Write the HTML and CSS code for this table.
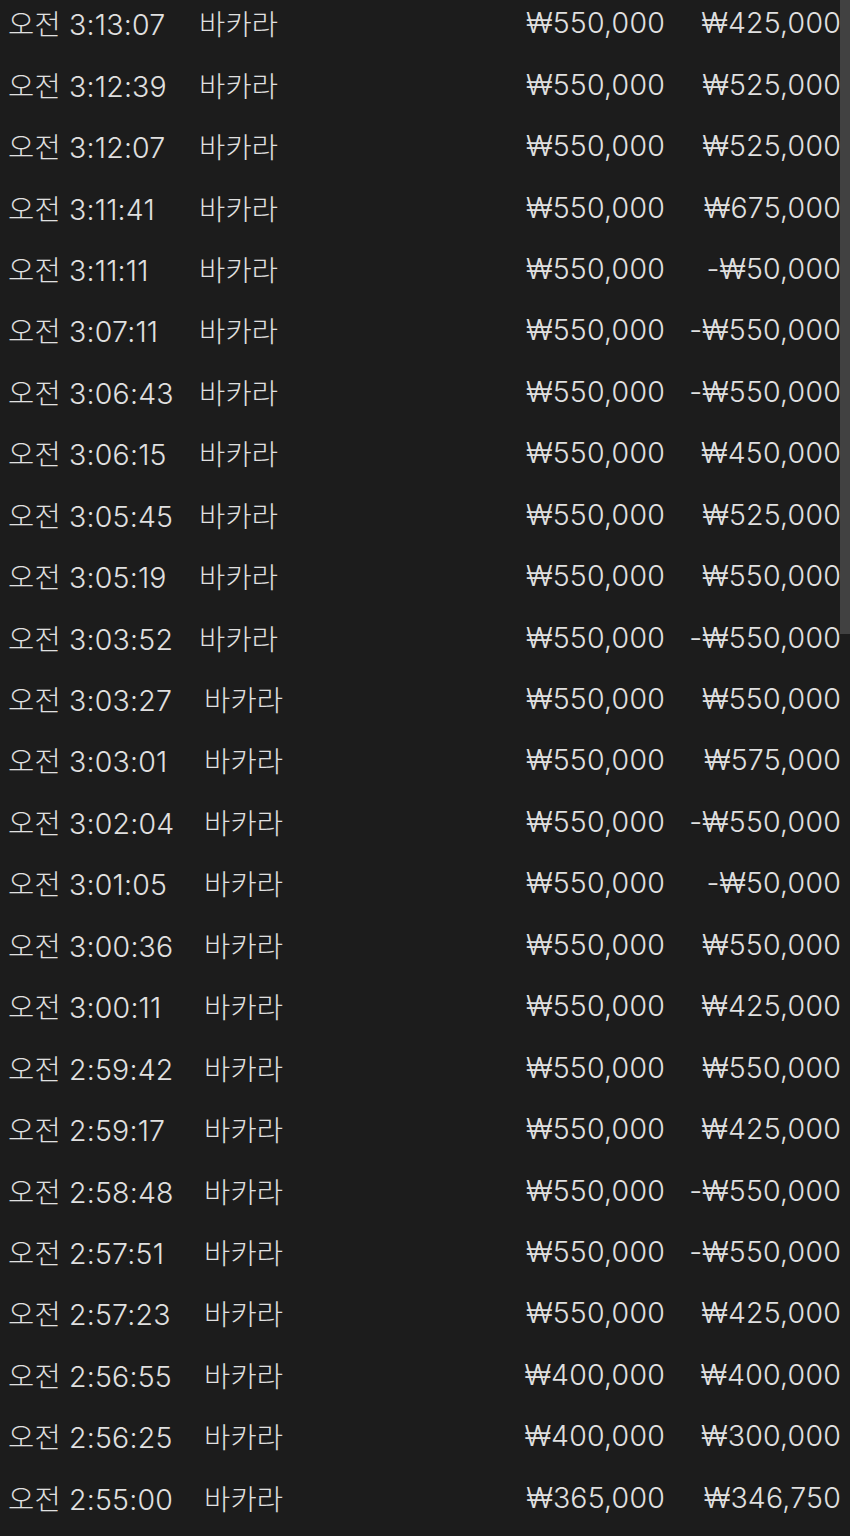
FILE: index.html
```html
<!DOCTYPE html>
<html lang="ko">
<head>
  <meta charset="UTF-8" />
  <meta name="viewport" content="width=device-width, initial-scale=1.0"/>
  <title>베팅 내역</title>
  <link rel="stylesheet" href="styles.css">
</head>
<body>
  <div class="history">
    <div class="row"><span class="time">오전 3:13:07</span><span class="game">바카라</span><span class="bet">₩550,000</span><span class="result">₩425,000</span></div>
    <div class="row"><span class="time">오전 3:12:39</span><span class="game">바카라</span><span class="bet">₩550,000</span><span class="result">₩525,000</span></div>
    <div class="row"><span class="time">오전 3:12:07</span><span class="game">바카라</span><span class="bet">₩550,000</span><span class="result">₩525,000</span></div>
    <div class="row"><span class="time">오전 3:11:41</span><span class="game">바카라</span><span class="bet">₩550,000</span><span class="result">₩675,000</span></div>
    <div class="row"><span class="time">오전 3:11:11</span><span class="game">바카라</span><span class="bet">₩550,000</span><span class="result">-₩50,000</span></div>
    <div class="row"><span class="time">오전 3:07:11</span><span class="game">바카라</span><span class="bet">₩550,000</span><span class="result">-₩550,000</span></div>
    <div class="row"><span class="time">오전 3:06:43</span><span class="game">바카라</span><span class="bet">₩550,000</span><span class="result">-₩550,000</span></div>
    <div class="row"><span class="time">오전 3:06:15</span><span class="game">바카라</span><span class="bet">₩550,000</span><span class="result">₩450,000</span></div>
    <div class="row"><span class="time">오전 3:05:45</span><span class="game">바카라</span><span class="bet">₩550,000</span><span class="result">₩525,000</span></div>
    <div class="row"><span class="time">오전 3:05:19</span><span class="game">바카라</span><span class="bet">₩550,000</span><span class="result">₩550,000</span></div>
    <div class="row"><span class="time">오전 3:03:52</span><span class="game">바카라</span><span class="bet">₩550,000</span><span class="result">-₩550,000</span></div>
    <div class="row shifted"><span class="time">오전 3:03:27</span><span class="game">바카라</span><span class="bet">₩550,000</span><span class="result">₩550,000</span></div>
    <div class="row shifted"><span class="time">오전 3:03:01</span><span class="game">바카라</span><span class="bet">₩550,000</span><span class="result">₩575,000</span></div>
    <div class="row shifted"><span class="time">오전 3:02:04</span><span class="game">바카라</span><span class="bet">₩550,000</span><span class="result">-₩550,000</span></div>
    <div class="row shifted"><span class="time">오전 3:01:05</span><span class="game">바카라</span><span class="bet">₩550,000</span><span class="result">-₩50,000</span></div>
    <div class="row shifted"><span class="time">오전 3:00:36</span><span class="game">바카라</span><span class="bet">₩550,000</span><span class="result">₩550,000</span></div>
    <div class="row shifted"><span class="time">오전 3:00:11</span><span class="game">바카라</span><span class="bet">₩550,000</span><span class="result">₩425,000</span></div>
    <div class="row shifted"><span class="time">오전 2:59:42</span><span class="game">바카라</span><span class="bet">₩550,000</span><span class="result">₩550,000</span></div>
    <div class="row shifted"><span class="time">오전 2:59:17</span><span class="game">바카라</span><span class="bet">₩550,000</span><span class="result">₩425,000</span></div>
    <div class="row shifted"><span class="time">오전 2:58:48</span><span class="game">바카라</span><span class="bet">₩550,000</span><span class="result">-₩550,000</span></div>
    <div class="row shifted"><span class="time">오전 2:57:51</span><span class="game">바카라</span><span class="bet">₩550,000</span><span class="result">-₩550,000</span></div>
    <div class="row shifted"><span class="time">오전 2:57:23</span><span class="game">바카라</span><span class="bet">₩550,000</span><span class="result">₩425,000</span></div>
    <div class="row shifted"><span class="time">오전 2:56:55</span><span class="game">바카라</span><span class="bet">₩400,000</span><span class="result">₩400,000</span></div>
    <div class="row shifted"><span class="time">오전 2:56:25</span><span class="game">바카라</span><span class="bet">₩400,000</span><span class="result">₩300,000</span></div>
    <div class="row shifted"><span class="time">오전 2:55:00</span><span class="game">바카라</span><span class="bet">₩365,000</span><span class="result">₩346,750</span></div>
  </div>
  <div class="scrollbar"></div>
</body>
</html>
```

FILE: styles.css
```css
html, body {
  height: 100%;
}

body {
  margin: 0;
  background: #1c1c1c;
  color: #e0e0e0;
  font-family: Inter, "Noto Sans CJK KR", sans-serif;
  font-size: 28.5px;
  font-weight: 300;
  letter-spacing: 0.2px;
  overflow: hidden;
}

.history {
  margin-top: -8px;
}

.row {
  display: grid;
  grid-template-columns: 191px 1fr 180px 176px;
  align-items: center;
  height: 61.45px;
  padding: 0 9px 0 8px;
  white-space: nowrap;
}

.bet,
.result {
  text-align: right;
}

.shifted .game {
  padding-left: 5px;
}

.scrollbar {
  position: fixed;
  top: 0;
  right: 0;
  width: 10px;
  height: 634px;
  background: #414141;
}
```
